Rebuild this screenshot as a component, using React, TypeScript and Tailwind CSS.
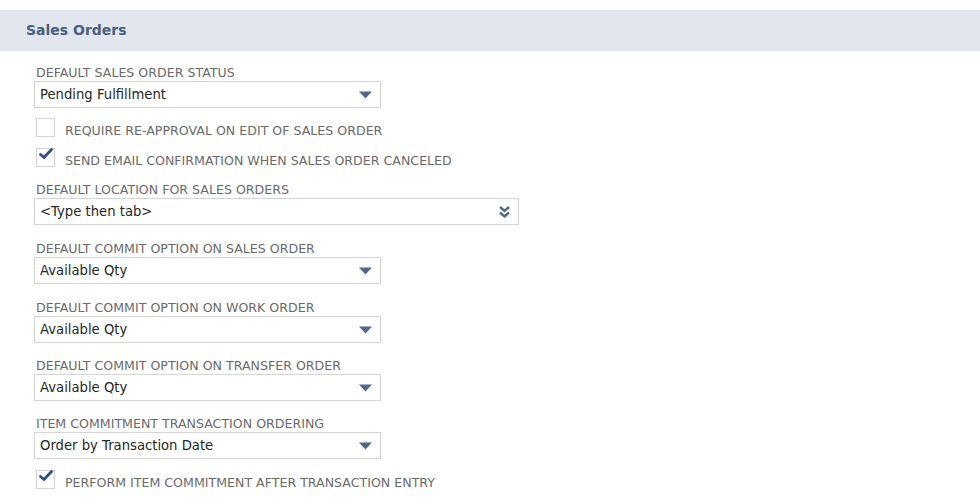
import React from 'react';

const font = { fontFamily: '"DejaVu Sans", Verdana, sans-serif' };

function Arrow() {
  return (
    <svg width="13" height="8" viewBox="0 0 13 8" className="shrink-0">
      <path d="M0 0.5 H13 L6.5 7.5 Z" fill="#52688a" />
    </svg>
  );
}

function DoubleChevron() {
  return (
    <svg width="11" height="12" viewBox="0 0 11 12" className="shrink-0">
      <path d="M1 1 L5.5 5 L10 1" stroke="#52688a" strokeWidth="2.4" fill="none" />
      <path d="M1 6.5 L5.5 10.5 L10 6.5" stroke="#52688a" strokeWidth="2.4" fill="none" />
    </svg>
  );
}

function Label({ children }: { children: React.ReactNode }) {
  return <div className="pl-[2px] pt-[1px] text-[12.6px] leading-[14px] text-[#6b6b6b] uppercase">{children}</div>;
}

function Select({ value, width = 'w-[347px]', combo = false }: { value: string; width?: string; combo?: boolean }) {
  return (
    <div
      className={`${width} h-[27px] mt-[1px] border border-[#d4d4d4] bg-white flex items-center justify-between pl-[5px] pr-[8px]`}
    >
      <span className="text-[13.2px] text-[#262626] pt-[1px]">{value}</span>
      {combo ? <DoubleChevron /> : <Arrow />}
    </div>
  );
}

function Check({ checked, label }: { checked: boolean; label: string }) {
  return (
    <div className="flex items-center h-[19px] pl-[2px]">
      <div className="w-[19px] h-[19px] border border-[#d4d4d4] bg-white relative shrink-0">
        {checked && (
          <svg width="16" height="14" viewBox="0 0 16 14" className="absolute left-[1px] top-[-2px]">
            <path d="M2.5 7.5 L6 10.5 L13.5 2.5" stroke="#2d4f8e" strokeWidth="2.8" fill="none" strokeLinecap="round" strokeLinejoin="round" />
          </svg>
        )}
      </div>
      <span className="ml-[10px] mt-[6px] text-[12.6px] leading-[14px] text-[#6b6b6b] uppercase">{label}</span>
    </div>
  );
}

export default function App() {
  return (
    <div className="w-[980px] h-[500px] bg-white overflow-hidden" style={font}>
      <div className="mt-[10px] h-[41px] bg-[#e1e6ef] flex items-center pl-[26px]">
        <span className="text-[14px] font-bold text-[#4a5d7c]">Sales Orders</span>
      </div>
      <div className="pl-[34px] pt-[14px]">
        <Label>Default Sales Order Status</Label>
        <Select value="Pending Fulfillment" />
        <div className="mt-[10px] flex flex-col gap-[11px]">
          <Check checked={false} label="Require Re-Approval on Edit of Sales Order" />
          <Check checked={true} label="Send Email Confirmation When Sales Order Canceled" />
        </div>
        <div className="mt-[15px]">
          <Label>Default Location for Sales Orders</Label>
          <Select value="<Type then tab>" width="w-[485px]" combo />
        </div>
        <div className="mt-[16px]">
          <Label>Default Commit Option on Sales Order</Label>
          <Select value="Available Qty" />
        </div>
        <div className="mt-[16px]">
          <Label>Default Commit Option on Work Order</Label>
          <Select value="Available Qty" />
        </div>
        <div className="mt-[15px]">
          <Label>Default Commit Option on Transfer Order</Label>
          <Select value="Available Qty" />
        </div>
        <div className="mt-[15px]">
          <Label>Item Commitment Transaction Ordering</Label>
          <Select value="Order by Transaction Date" />
        </div>
        <div className="mt-[11px]">
          <Check checked={true} label="Perform Item Commitment after Transaction Entry" />
        </div>
      </div>
    </div>
  );
}
